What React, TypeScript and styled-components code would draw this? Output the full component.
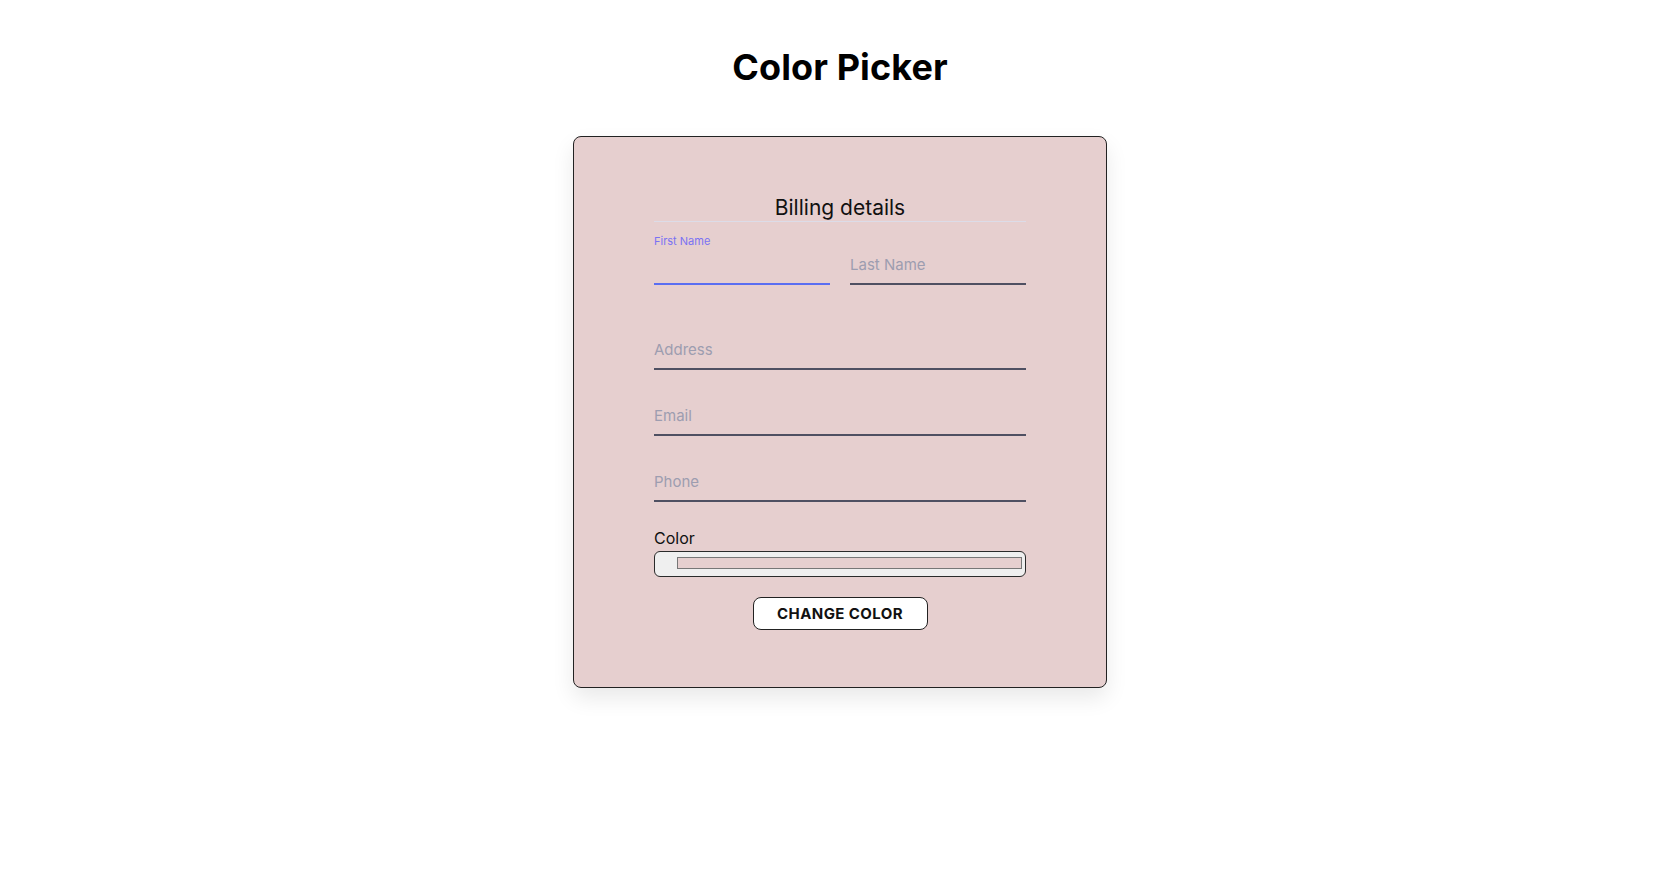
import React, { useState } from "react";
import styled, { createGlobalStyle } from "styled-components";

const GlobalStyle = createGlobalStyle`
  html, body { margin: 0; padding: 0; background: #ffffff; }
  body { font-family: Inter, "Noto Sans", "Liberation Sans", sans-serif; color: #111; }
  * { box-sizing: border-box; }
`;

const Page = styled.main`
  display: flex;
  flex-direction: column;
  align-items: center;
  padding-top: 45px;
  padding-bottom: 60px;
`;

const Title = styled.h1`
  margin: 0 0 47px;
  font-size: 36px;
  line-height: 44px;
  font-weight: 700;
  letter-spacing: 0.1px;
  color: #000;
`;

const Card = styled.section<{ $bg: string }>`
  width: 534px;
  background: ${(p) => p.$bg};
  border: 1px solid #222;
  border-radius: 8px;
  box-shadow: 0 10px 22px rgba(0, 0, 0, 0.09);
  padding: 58px 80px 57px;
`;

const Form = styled.form`
  display: flex;
  flex-direction: column;
`;

const Heading = styled.h2`
  margin: 0;
  font-size: 21px;
  line-height: 26px;
  font-weight: 400;
  text-align: center;
  color: #111;
  padding-bottom: 0;
  border-bottom: 1px solid #dcdce8;
`;

const Fields = styled.div`
  display: flex;
  flex-direction: column;
  gap: 30px;
  margin-top: 27px;
`;

const NameRow = styled.div`
  display: grid;
  grid-template-columns: 1fr 1fr;
  column-gap: 20px;
  margin-bottom: 19px;
`;

const Field = styled.div`
  position: relative;
`;

const FloatLabel = styled.label`
  position: absolute;
  left: 0;
  top: -15px;
  font-size: 11px;
  line-height: 14px;
  color: #7a72f3;
`;

const Input = styled.input<{ $focused?: boolean }>`
  display: block;
  width: 100%;
  height: 36px;
  padding: 0 0 4px;
  border: none;
  border-bottom: 2px solid ${(p) => (p.$focused ? "#5a6ef2" : "#4f5062")};
  background: transparent;
  font-family: inherit;
  font-size: 15px;
  line-height: 30px;
  color: #222;
  outline: none;
  &::placeholder { color: #9d9db0; opacity: 1; }
`;

const ColorLabel = styled.label`
  display: block;
  margin-top: 26px;
  margin-bottom: 3px;
  font-size: 16px;
  line-height: 20px;
  color: #111;
`;

const ColorInput = styled.input`
  -webkit-appearance: none;
  appearance: none;
  display: block;
  width: 100%;
  height: 26px;
  margin: 0;
  padding: 5px 3px 7px 22px;
  border: 1px solid #2a2a2a;
  border-radius: 6px;
  background: #efefef;
  cursor: pointer;
  &::-webkit-color-swatch-wrapper { padding: 0; }
  &::-webkit-color-swatch { border: 1px solid #777; border-radius: 0; }
`;

const Button = styled.button`
  align-self: center;
  width: 175px;
  height: 33px;
  margin-top: 20px;
  background: #fff;
  border: 1px solid #222;
  border-radius: 8px;
  font-family: inherit;
  font-size: 15px;
  font-weight: 700;
  letter-spacing: 0.4px;
  text-transform: uppercase;
  color: #111;
  cursor: pointer;
`;

export default function App() {
  const [color, setColor] = useState("#e6cfcf");
  const [bg, setBg] = useState("#e6cfcf");
  return (
    <>
      <GlobalStyle />
      <Page>
        <Title>Color Picker</Title>
        <Card $bg={bg}>
          <Form onSubmit={(e) => { e.preventDefault(); setBg(color); }}>
            <Heading>Billing details</Heading>
            <Fields>
              <NameRow>
                <Field>
                  <FloatLabel htmlFor="first">First Name</FloatLabel>
                  <Input id="first" $focused />
                </Field>
                <Field>
                  <Input placeholder="Last Name" />
                </Field>
              </NameRow>
              <Field>
                <Input placeholder="Address" />
              </Field>
              <Field>
                <Input placeholder="Email" />
              </Field>
              <Field>
                <Input placeholder="Phone" />
              </Field>
            </Fields>
            <ColorLabel htmlFor="color">Color</ColorLabel>
            <ColorInput
              id="color"
              type="color"
              value={color}
              onChange={(e) => setColor(e.target.value)}
            />
            <Button type="submit">Change Color</Button>
          </Form>
        </Card>
      </Page>
    </>
  );
}
